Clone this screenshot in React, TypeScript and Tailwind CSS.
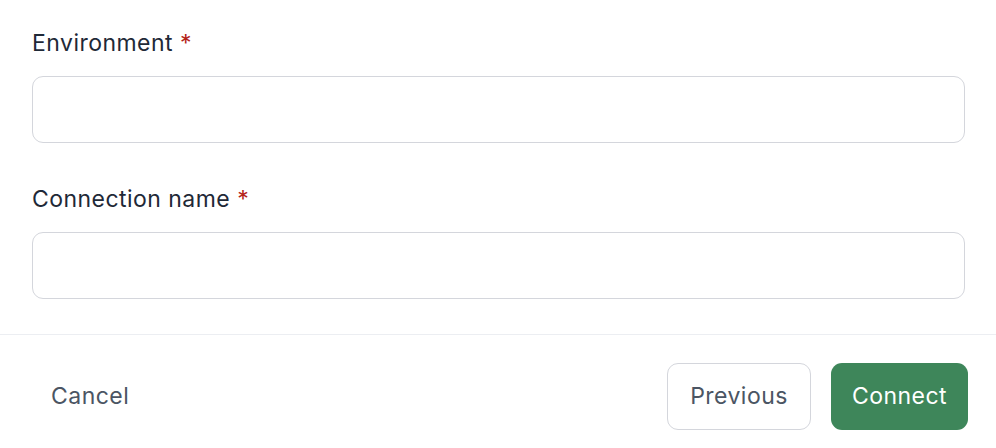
const Field = ({ label }: { label: string }) => (
  <div className="flex flex-col gap-[16px]">
    <label className="text-[23px] leading-[33px] font-normal tracking-[0.02em] text-[#1f2937]">
      {label} <span className="text-[#b42318]">*</span>
    </label>
    <input
      type="text"
      className="h-[67px] w-full rounded-[11px] border-[1.5px] border-[#d4d6dc] bg-white px-4 text-[22px] outline-none"
    />
  </div>
);

export default function App() {
  return (
    <div
      className="h-[448px] w-[996px] overflow-hidden bg-white"
      style={{ fontFamily: "Inter, 'Noto Sans', sans-serif" }}
    >
      <div className="flex flex-col gap-[40px] pt-[27px] pl-[32px] pr-[31px] pb-[35px]">
        <Field label="Environment" />
        <Field label="Connection name" />
      </div>
      <div className="border-t-[1.5px] border-[#eceef2]" />
      <div className="flex items-center justify-between pt-[28px] pl-[31px] pr-[28px]">
        <button className="h-[67px] rounded-[11px] px-[20px] text-[23px] tracking-[0.02em] text-[#4b5563]">
          Cancel
        </button>
        <div className="flex gap-[20px]">
          <button className="h-[67px] w-[144px] rounded-[11px] border-[1.5px] border-[#d4d6dc] bg-white text-[23px] tracking-[0.02em] text-[#4b5563]">
            Previous
          </button>
          <button className="h-[67px] w-[137px] rounded-[11px] bg-[#3e865a] text-[23px] tracking-[0.02em] text-white">
            Connect
          </button>
        </div>
      </div>
    </div>
  );
}
